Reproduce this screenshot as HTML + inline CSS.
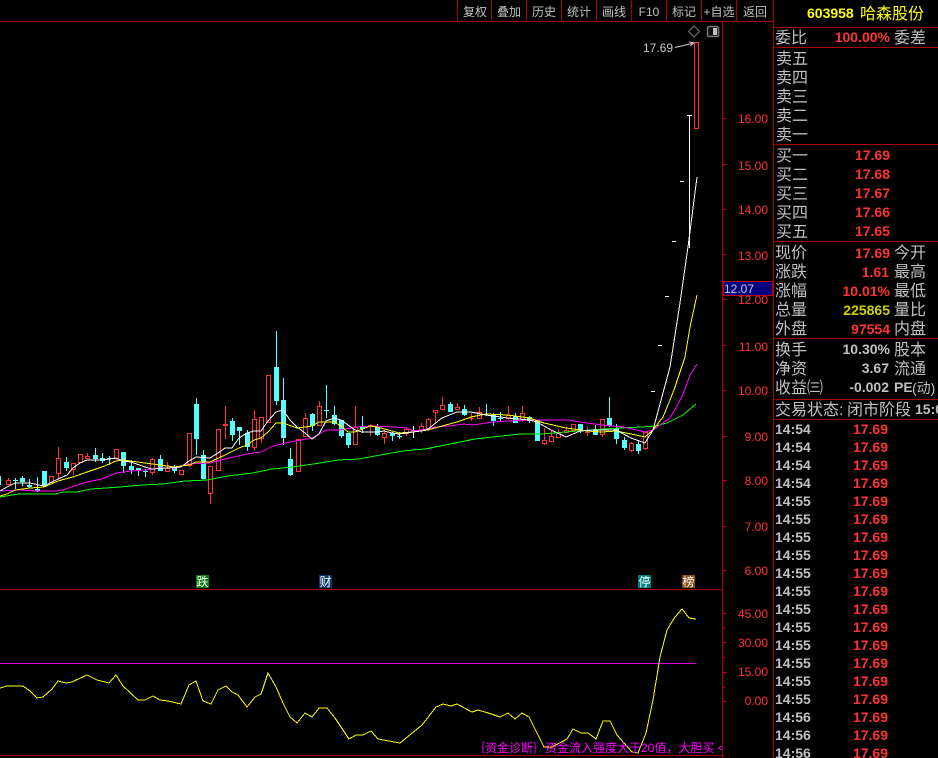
<!DOCTYPE html>
<html><head><meta charset="utf-8"><style>
html,body{margin:0;padding:0;background:#000;width:938px;height:758px;overflow:hidden}
svg{display:block}
text{font-family:"Liberation Sans","WenQuanYi Zen Hei","Noto Sans CJK SC",sans-serif}
.tb{font-size:12px;fill:#c0c0c0;text-anchor:middle}
.ax{font-size:12px;fill:#ff3232;text-anchor:end}
.l{font-size:16px;fill:#c0c0c0}
.v{font-size:14px;font-weight:bold;fill:#ff3232;text-anchor:end}
.t{font-size:14px;font-weight:bold;fill:#c0c0c0}
.p{font-size:14px;font-weight:bold;fill:#ff3232;text-anchor:end}
.m{font-size:12px;fill:#fff;text-anchor:middle}
</style></head><body>
<svg width="938" height="758" viewBox="0 0 938 758" xmlns="http://www.w3.org/2000/svg">
<rect width="938" height="758" fill="#000"/>
<g shape-rendering="crispEdges">
<!-- frame -->
<path d="M0 21.5H773M0 589.5H722M0 755.5H722M722.5 22V758M773.5 0V758M457.5 0V21M491.5 0V21M526.5 0V21M561.5 0V21M596.5 0V21M631.5 0V21M666.5 0V21M701.5 0V21M736.5 0V21M774 27.5H938M774 47.5H938M774 144.5H938M774 241.5H938M774 338.5H938M774 399.5H938M774 419.5H938" stroke="#a80000" fill="none"/>
<path d="M722 118.5h5M722 164.5h5M722 209.5h5M722 254.5h5M722 299.5h5M722 345.5h5M722 390.5h5M722 436.5h5M722 480.5h5M722 526.5h5M722 570.5h5M722 613.5h5M722 628.5h3M722 642.5h5M722 657.5h3M722 672.5h5M722 687.5h3M722 701.5h5" stroke="#c00000" fill="none"/>
<!-- cyan wicks -->
<path fill="none" stroke="#54ffff" d="M0.5 476V485M15.5 478V489M22.5 476V486M29.5 479V488M37.5 477V492M44.5 471V487M66.5 457V471M95.5 448V462M102.5 453V463M109.5 456V465M123.5 452V473M131.5 462V474M138.5 468V476M145.5 469V477M160.5 455V471M174.5 465V473M196.5 398V455M203.5 450V479M232.5 418V441M239.5 427V445M247.5 430V451M276.5 331V405M283.5 378V445M290.5 448V476M312.5 413V431M326.5 385V418M334.5 406V425M341.5 420V438M348.5 433V448M362.5 416V433M377.5 424V436M392.5 432V441M399.5 432V439M450.5 402V412M464.5 405V416M486.5 404V416M493.5 413V426M500.5 412V421M515.5 413V423M529.5 416V423M537.5 420V441M580.5 424V433M595.5 425V435M609.5 397V427M616.5 424V444M624.5 437V450M638.5 441V454"/>
<!-- cyan bodies -->
<path fill="none" stroke="#54ffff" stroke-width="5" d="M15.5 480V481M22.5 478V482M29.5 485V487M37.5 489V491M44.5 471V486M66.5 462V468M95.5 455V459M102.5 458V461M109.5 458V459M123.5 452V466M131.5 466V470M138.5 468V470M145.5 471V472M160.5 459V471M174.5 467V471M196.5 404V439M203.5 455V479M232.5 421V435M239.5 427V431M247.5 433V447M276.5 367V401M283.5 400V438M290.5 459V475M312.5 414V426M326.5 410V411M334.5 415V424M341.5 420V436M348.5 433V445M362.5 427V429M377.5 427V435M392.5 433V436M399.5 436V437M450.5 404V412M464.5 409V415M493.5 415V421M500.5 418V419M515.5 416V423M529.5 417V421M537.5 420V441M580.5 424V431M595.5 430V435M609.5 418V426M616.5 428V439M624.5 440V448M638.5 444V451"/>
<!-- red wicks -->
<path fill="none" stroke="#ff3232" d="M8.5 478V485M51.5 476V483M58.5 447V480M73.5 463V475M80.5 454V463M87.5 453V459M116.5 449V461M152.5 458V475M167.5 462V472M181.5 470V475M189.5 433V467M210.5 466V504M218.5 429V471M254.5 410V450M261.5 417V443M268.5 375V423M298.5 439V472M305.5 413V437M319.5 401V426M355.5 406V445M384.5 430V444M406.5 427V436M421.5 423V433M428.5 418V431M435.5 410V423M442.5 397V410M457.5 403V410M479.5 407V419M508.5 406V420M522.5 406V422M544.5 428V445M551.5 430V442M558.5 429V438M566.5 427V433M573.5 424V432M602.5 419V437M631.5 442V452M645.5 432V450M225.5 406V439M370.5 424V436M471.5 413V421M587.5 427V436"/>
<path fill="none" stroke="#ff3232" stroke-width="5" d="M225.5 424V426M370.5 425V426M471.5 418V419M587.5 432V433"/>
<!-- red hollow -->
<path fill="#000" stroke="#ff3232" d="M6.5 480.5h4v4h-4zM49.5 476.5h4v6h-4zM56.5 458.5h4v15h-4zM71.5 463.5h4v6h-4zM78.5 454.5h4v8h-4zM85.5 456.5h4v2h-4zM114.5 449.5h4v9h-4zM150.5 459.5h4v13h-4zM165.5 468.5h4v3h-4zM179.5 470.5h4v4h-4zM187.5 433.5h4v32h-4zM208.5 466.5h4v27h-4zM216.5 429.5h4v41h-4zM252.5 419.5h4v28h-4zM259.5 417.5h4v21h-4zM266.5 375.5h4v47h-4zM296.5 439.5h4v32h-4zM303.5 418.5h4v18h-4zM317.5 406.5h4v19h-4zM353.5 427.5h4v17h-4zM382.5 433.5h4v4h-4zM404.5 429.5h4v4h-4zM419.5 426.5h4v4h-4zM426.5 419.5h4v9h-4zM433.5 410.5h4v2h-4zM440.5 405.5h4v4h-4zM455.5 407.5h4v2h-4zM477.5 412.5h4v6h-4zM506.5 415.5h4v3h-4zM520.5 413.5h4v7h-4zM542.5 440.5h4v3h-4zM549.5 436.5h4v5h-4zM556.5 433.5h4v4h-4zM564.5 430.5h4v2h-4zM571.5 424.5h4v6h-4zM600.5 419.5h4v15h-4zM629.5 443.5h4v7h-4zM643.5 432.5h4v16h-4zM694.5 42.5h4v86h-4z"/>
<!-- white cross and limit-up wick -->
<path fill="none" stroke="#fff" d="M413.5 426V438M411 430.5h5M689.5 116V248M687 115.5h5M680 181.5h4M672 241.5h4M665 296.5h4M658 345.5h4M651 391.5h4"/>
<!-- MA lines -->
<polyline fill="none" stroke="#00ff00" points="0,497 19,494 55,494 63,492 77,492 91,489 120,487 142,485 163,484 185,481 207,480 228,476 253,473 272,469 293,467 320,463 338,460 359,459 375,456 403,451 425,449 450,444 475,439 520,434 542,434 565,432 590,430 620,428 642,427 655,426 667,423 683,415 696,404"/>
<polyline fill="none" stroke="#ff00ff" points="0,491 21,490 37,491 55,491 63,490 80,484 87,482 102,479 116,473 131,471 145,470 160,468 174,468 189,464 210,463 225,459 247,454 261,452 273,446 290,442 312,438 326,430 340,430 355,427 373,426 395,427 407,428 413,431 428,429 435,427 450,426 463,424 473,425 493,422 508,421 529,420 568,420 580,422 602,425 623,427 645,432 653,430 670,418 682,397 690,375 697,364"/>
<polyline fill="none" stroke="#ffff00" points="0,496 7,494 15,490 30,488 44,487 58,481 73,477 87,472 102,467 116,461 123,460 145,463 160,465 174,467 189,465 196,462 210,462 225,455 239,448 247,445 254,440 261,438 268,432 276,423 283,423 297,428 305,427 312,426 319,422 334,422 341,426 348,432 355,432 370,426 377,427 392,431 399,433 413,432 428,430 442,426 457,422 471,417 486,414 508,415 529,418 544,423 566,428 587,431 602,432 616,431 631,434 645,437 653,430 663,417 674,390 685,357 690,327 697,295"/>
<polyline fill="none" stroke="#ffffff" points="0,491 7,487 15,483 30,483 44,486 58,479 67,475 73,468 80,463 87,460 102,460 116,458 123,461 131,462 145,467 152,469 167,468 181,467 189,461 196,457 210,458 218,453 225,448 232,448 239,438 247,433 254,431 261,431 268,421 276,412 283,410 290,420 297,427 305,433 312,439 319,434 326,421 334,418 341,420 348,425 355,430 362,432 377,432 384,431 392,433 399,434 413,432 421,431 428,429 442,418 457,412 471,412 486,415 508,418 529,420 537,422 551,430 566,437 580,431 595,430 616,430 631,438 645,443 653,430 670,367 680,303 688,247 697,177"/>
<!-- sub chart -->
<path d="M0 663.5H696" stroke="#e000e0" fill="none"/>
<polyline fill="none" stroke="#ffff00" points="0,688 7,686 23,686 30,691 37,698 43,697 52,689 58,681 66,683 72,682 87,675 97,680 109,683 116,675 123,686 138,700 145,700 153,696 160,700 168,701 181,704 189,685 196,681 203,701 211,704 218,690 226,686 232,692 238,695 247,707 255,697 261,694 268,673 276,687 283,703 290,717 297,723 305,713 312,717 319,708 327,708 335,718 349,739 356,735 363,735 371,731 378,739 400,743 422,725 436,707 443,704 451,706 457,704 472,712 478,710 485,712 500,717 508,713 515,719 522,713 529,717 537,733 544,747 552,747 567,739 573,729 581,733 588,733 596,739 603,721 610,721 617,735 632,752 638,753 646,733 653,700 660,657 667,630 675,617 682,609 689,618 696,619"/>
<!-- marks -->
<rect x="196" y="575" width="13" height="13" fill="#0a7a14"/>
<rect x="319" y="575" width="13" height="13" fill="#0c3a6c"/>
<rect x="638" y="575" width="13" height="13" fill="#008080"/>
<rect x="682" y="575" width="13" height="13" fill="#8a4a10"/>
<!-- price tag -->
<rect x="723.5" y="281.5" width="49" height="14" fill="#000080" stroke="#c00000"/>
</g>
<!-- arrow and icons -->
<path d="M675 47.5 L694 43 M689 42 L694 43 L690 46" stroke="#c8c8c8" fill="none"/>
<path d="M694 26 L699.5 31.5 L694 37 L688.500 31.500Z" stroke="#777" fill="none"/>
<rect x="707.500" y="26.500" width="11" height="10" rx="1.500" fill="#111" stroke="#777" stroke-width="1.500"/>
<rect x="713" y="28" width="4" height="7" fill="#c0c0c0"/>
<!-- toolbar -->
<text class="tb" x="475" y="16">复权</text><text class="tb" x="509" y="16">叠加</text><text class="tb" x="544" y="16">历史</text><text class="tb" x="579" y="16">统计</text><text class="tb" x="614" y="16">画线</text><text class="tb" x="649" y="16">F10</text><text class="tb" x="684" y="16">标记</text><text class="tb" x="719" y="16">+自选</text><text class="tb" x="755" y="16">返回</text>
<!-- axis -->
<text class="ax" x="768" y="123">16.00</text><text class="ax" x="768" y="170">15.00</text><text class="ax" x="768" y="214">14.00</text><text class="ax" x="768" y="260">13.00</text><text class="ax" x="768" y="304">12.00</text><text class="ax" x="768" y="351">11.00</text><text class="ax" x="768" y="395">10.00</text><text class="ax" x="768" y="441">9.00</text><text class="ax" x="768" y="485">8.00</text><text class="ax" x="768" y="531">7.00</text><text class="ax" x="768" y="575">6.00</text>
<text class="ax" x="768" y="618">45.00</text><text class="ax" x="768" y="647">30.00</text><text class="ax" x="768" y="676">15.00</text><text class="ax" x="768" y="705">0.00</text>
<rect x="724" y="282" width="48" height="13" fill="#000080"/>
<text x="724" y="293" font-size="12" fill="#c8c8c8">12.07</text>
<text x="643" y="52" font-size="12" fill="#c8c8c8">17.69</text>
<text class="m" x="202.500" y="586">跌</text><text class="m" x="325.500" y="586">财</text><text class="m" x="644.500" y="586">停</text><text class="m" x="688.500" y="586">榜</text>
<svg x="0" y="0" width="722" height="758"><text x="473" y="752" font-size="12" fill="#ff00ff">｛资金诊断｝资金流入强度大于20值，大胆买 &lt;&lt;</text></svg>
<!-- right panel -->
<text x="807" y="18" font-size="14" font-weight="bold" fill="#ffff00">603958</text>
<text x="860" y="19" font-size="16" fill="#ffff00">哈森股份</text>
<text class="l" x="775" y="43">委比</text><text class="v" x="890" y="42">100.00%</text><text class="l" x="894" y="43">委差</text>
<text class="l" x="776" y="64">卖五</text><text class="l" x="776" y="83">卖四</text><text class="l" x="776" y="102">卖三</text><text class="l" x="776" y="121">卖二</text><text class="l" x="776" y="140">卖一</text>
<text class="l" x="776" y="161">买一</text><text class="l" x="776" y="180">买二</text><text class="l" x="776" y="199">买三</text><text class="l" x="776" y="218">买四</text><text class="l" x="776" y="237">买五</text>
<text class="v" x="890" y="160">17.69</text><text class="v" x="890" y="179">17.68</text><text class="v" x="890" y="198">17.67</text><text class="v" x="890" y="217">17.66</text><text class="v" x="890" y="236">17.65</text>
<text class="l" x="775" y="258">现价</text><text class="l" x="775" y="277">涨跌</text><text class="l" x="775" y="296">涨幅</text><text class="l" x="775" y="315">总量</text><text class="l" x="775" y="334">外盘</text>
<text class="v" x="890" y="258">17.69</text><text class="v" x="889" y="277">1.61</text><text class="v" x="890" y="296">10.01%</text><text class="v" x="890" y="315" style="fill:#d2d200">225865</text><text class="v" x="890" y="334">97554</text>
<text class="l" x="894" y="258">今开</text><text class="l" x="894" y="277">最高</text><text class="l" x="894" y="296">最低</text><text class="l" x="894" y="315">量比</text><text class="l" x="894" y="334">内盘</text>
<text class="l" x="775" y="355">换手</text><text class="l" x="775" y="374">净资</text><text class="l" x="775" y="393">收益㈢</text>
<text class="v" x="890" y="354" style="fill:#c0c0c0">10.30%</text><text class="v" x="889" y="373" style="fill:#c0c0c0">3.67</text><text class="v" x="889" y="392" style="fill:#c0c0c0">-0.002</text>
<text class="l" x="894" y="355">股本</text><text class="l" x="894" y="374">流通</text><text x="894" y="392" font-size="14" font-weight="bold" fill="#c0c0c0">PE</text><text x="912" y="393" font-size="14" fill="#c0c0c0">(动)</text>
<text class="l" x="775" y="415">交易状态:</text><text class="l" x="847" y="415">闭市阶段</text><text x="915" y="414" font-size="14" font-weight="bold" fill="#c0c0c0">15:00</text>
<text class="t" x="775" y="434">14:54</text><text class="p" x="888" y="434">17.69</text>
<text class="t" x="775" y="452">14:54</text><text class="p" x="888" y="452">17.69</text>
<text class="t" x="775" y="470">14:54</text><text class="p" x="888" y="470">17.69</text>
<text class="t" x="775" y="488">14:54</text><text class="p" x="888" y="488">17.69</text>
<text class="t" x="775" y="506">14:55</text><text class="p" x="888" y="506">17.69</text>
<text class="t" x="775" y="524">14:55</text><text class="p" x="888" y="524">17.69</text>
<text class="t" x="775" y="542">14:55</text><text class="p" x="888" y="542">17.69</text>
<text class="t" x="775" y="560">14:55</text><text class="p" x="888" y="560">17.69</text>
<text class="t" x="775" y="578">14:55</text><text class="p" x="888" y="578">17.69</text>
<text class="t" x="775" y="596">14:55</text><text class="p" x="888" y="596">17.69</text>
<text class="t" x="775" y="614">14:55</text><text class="p" x="888" y="614">17.69</text>
<text class="t" x="775" y="632">14:55</text><text class="p" x="888" y="632">17.69</text>
<text class="t" x="775" y="650">14:55</text><text class="p" x="888" y="650">17.69</text>
<text class="t" x="775" y="668">14:55</text><text class="p" x="888" y="668">17.69</text>
<text class="t" x="775" y="686">14:55</text><text class="p" x="888" y="686">17.69</text>
<text class="t" x="775" y="704">14:55</text><text class="p" x="888" y="704">17.69</text>
<text class="t" x="775" y="722">14:56</text><text class="p" x="888" y="722">17.69</text>
<text class="t" x="775" y="740">14:56</text><text class="p" x="888" y="740">17.69</text>
<text class="t" x="775" y="758">14:56</text><text class="p" x="888" y="758">17.69</text>
</svg>
</body></html>
